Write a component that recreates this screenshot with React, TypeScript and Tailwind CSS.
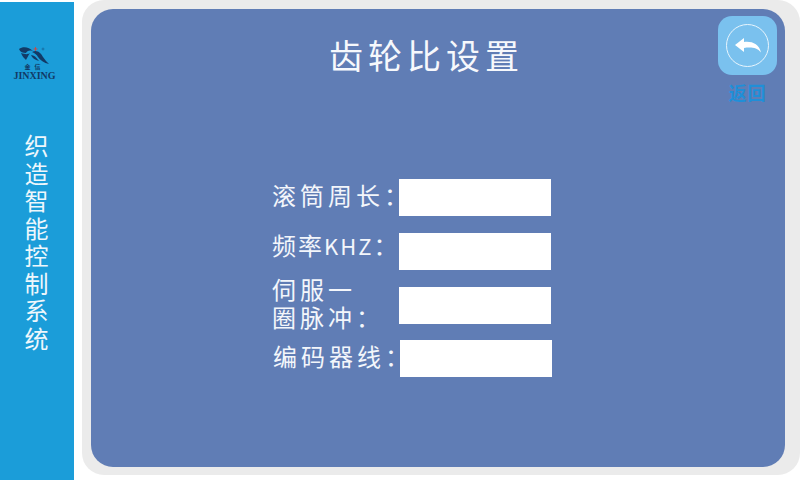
const cjk = { fontFamily: '"Noto Sans CJK SC", sans-serif' };

function Logo() {
  return (
    <div className="flex flex-col items-center">
      <svg width="34" height="18" viewBox="0 0 34 18">
        <path d="M2 3C6 0 12 1 16 5C12 4 10 5 9 7C6 7 3 6 2 3Z" fill="#123a66" />
        <path d="M4 7C8 8 10 9 13 7C11 10 10 12 9 14C7 12 5 10 4 7Z" fill="#123a66" />
        <path d="M15 6C20 3 24 7 26 11C28 14 30 16 32 18C27 17 23 14 21 11C20 9 18 7 15 6Z" fill="#123a66" />
        <path d="M14 9C17 9 19 11 22 15C18 14 15 12 14 9Z" fill="#123a66" />
        <path d="M18.5 1V5M16.5 3H20.5" stroke="#d8433a" strokeWidth="0.9" />
        <circle cx="26" cy="3" r="1" fill="none" stroke="#123a66" strokeWidth="0.4" />
      </svg>
      <span className="text-[6px] leading-[6px] tracking-[4px] text-[#123a66] font-bold" style={cjk}>金信</span>
      <span className="mt-[1px] text-[10px] leading-[9px] font-bold text-[#123a66] font-['Liberation_Serif',serif]">JINXING</span>
    </div>
  );
}

function Row({ label, shift, offset }: { label: React.ReactNode; shift?: boolean; offset: string }) {
  return (
    <div className={shift ? "flex items-center h-[37px] ml-[1px]" : "flex items-center h-[37px]"}>
      <div className={`w-[127px] ${offset} text-[24px] leading-[28px] tracking-[4px] text-[#f3f6fb] whitespace-nowrap`} style={cjk}>
        {label}
      </div>
      <div className="w-[152px] h-[37px] bg-white" />
    </div>
  );
}

export default function App() {
  return (
    <div className="w-[800px] h-[480px] bg-white flex overflow-hidden" style={cjk}>
      <aside className="w-[74px] h-[478px] mt-[2px] bg-[#1b9dd9] flex flex-col items-center shrink-0">
        <div className="mt-[44px] ml-[-5px]"><Logo /></div>
        <div className="mt-[51px] w-[24px] ml-[-1px] text-[24px] leading-[27.5px] text-center text-[#eef7fc]">
          织造智能控制系统
        </div>
      </aside>
      <main className="ml-[8px] w-[718px] h-[475px] bg-[#ebebeb] rounded-[22px] pl-[9px] pr-[15px] pt-[9px] pb-[8px]">
        <div className="relative h-full bg-[#607db5] rounded-[22px] flex flex-col items-center">
          <h1 className="mt-[24px] ml-[-23px] h-[44px] text-[34px] leading-[44px] tracking-[5px] text-[#f6f8fc] font-normal">齿轮比设置</h1>
          <div className="absolute top-[7px] left-[627px] w-[59px] flex flex-col items-center">
            <div className="w-[59px] h-[59px] rounded-[14px] bg-[#7ac1ee] flex items-center justify-center">
              <div className="w-[43px] h-[43px] rounded-full border border-[#e8f5fd] flex items-center justify-center">
                <svg width="26" height="15" viewBox="0 0 26 15">
                  <path d="M0 7L9 0V4C17 3 24 6 26 14.5C22 9.5 16 9 9 10V14Z" fill="#ffffff" />
                </svg>
              </div>
            </div>
            <span className="mt-[5px] text-[18px] leading-[24px] tracking-[1px] font-bold text-[#1f8fd8]">返回</span>
          </div>
          <div className="mt-[102px] ml-[-52px] flex flex-col">
            <Row offset="mt-[-5px]" label="滚筒周长：" />
            <div className="h-[17px]" />
            <Row offset="mt-[-14px]" label={<><span className="tracking-[2px]">频率</span><span className="text-[22px] tracking-[2px]">KHZ</span>：</>} />
            <div className="h-[17px]" />
            <Row offset="mt-[-6px]" label={<>伺服一<br />圈脉冲：</>} />
            <div className="h-[16px]" />
            <Row offset="mt-[-5px]" label="编码器线：" shift />
          </div>
        </div>
      </main>
    </div>
  );
}
